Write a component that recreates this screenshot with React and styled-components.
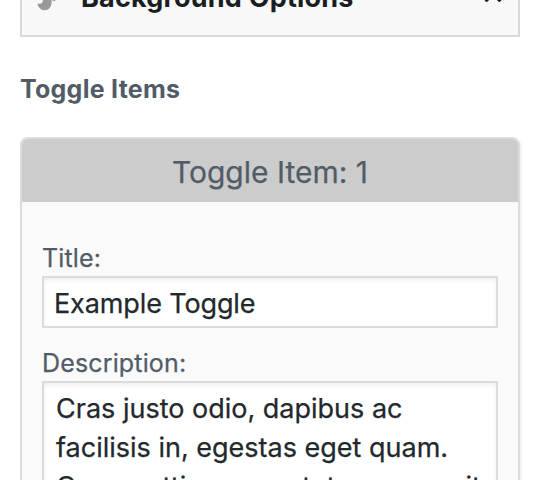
import React from "react";
import styled, { createGlobalStyle } from "styled-components";

const GlobalStyle = createGlobalStyle`
  * {
    box-sizing: border-box;
  }
  body {
    margin: 0;
    background: #fff;
    color: #525c67;
    font-family: Inter, "Liberation Sans", sans-serif;
    overflow: hidden;
  }
`;
const Sidebar = styled.div`
  height: 480px;
  padding: 0 20px;
  overflow: hidden;
`;
const PanelToggle = styled.div`
  display: flex;
  align-items: flex-start;
  justify-content: space-between;
  height: 37px;
  padding: 0 12px 0 14px;
  background: #f8f8f8;
  border: 2px solid #d9d9d9;
  border-top: 0;
  svg {
    flex: none;
  }
`;
const PanelTitle = styled.div`
  flex: 1;
  margin: -20px 0 0 25px;
  color: #191e23;
  font-size: 27px;
  font-weight: 700;
  line-height: 36px;
  letter-spacing: 0.2px;
  white-space: nowrap;
`;
const SectionTitle = styled.h2`
  margin: 35px 0 0;
  height: 65px;
  font-size: 25px;
  font-weight: 700;
  line-height: 34px;
  letter-spacing: 0.25px;
`;
const Card = styled.div`
  height: 380px;
  background: #fafafa;
  border: 2px solid #dcdcdc;
  border-radius: 8px 8px 0 0;
  box-shadow: 2px 2px 2px rgba(0, 0, 0, 0.05);
  -webkit-text-stroke: 0.25px;
`;
const CardHeader = styled.div`
  height: 63px;
  background: #ccc;
  border-radius: 6px 6px 0 0;
  font-size: 30px;
  line-height: 66px;
  text-align: center;
`;
const CardBody = styled.div`
  padding: 39px 20px 0;
`;
const Label = styled.label`
  display: block;
  height: 35px;
  font-size: 25px;
  line-height: 34px;
  letter-spacing: 0.15px;
`;
const Field = styled.div`
  height: ${props => props.height};
  margin-bottom: 18px;
  padding: ${props => props.inset};
  background: #fff;
  border: 2px solid #dcdcdc;
  box-shadow: inset 0 2px 4px rgba(0, 0, 0, 0.07);
  color: #23282d;
  font-size: 27px;
  line-height: 39px;
  white-space: nowrap;
`;
const Line = styled.div`
  letter-spacing: ${props => props.spacing || "normal"};
`;

const BrushIcon = () => (
  <svg width="20" height="14" viewBox="0 0 20 14">
    <path
      d="M1.500 3.200C3.500 4.200 5.500 3.800 6.300 2.400L7 0h8.500c.8 5.500-2 10.200-6.700 10.200C5 10.200 2 7.500 1.500 3.200z"
      fill="#999"
    />
    <path d="M16.500 0h3.500l-1.500 1.200h-2z" fill="#aaa" />
  </svg>
);
const ChevronIcon = () => (
  <svg width="26" height="8" viewBox="0 0 26 8">
    <path
      d="M6.600 0L13-7l6.400 7"
      stroke="#191e23"
      strokeWidth="3.6"
      strokeLinecap="round"
      fill="none"
    />
  </svg>
);

const App = () => {
  return (
    <>
      <GlobalStyle />
      <Sidebar>
        <PanelToggle>
          <BrushIcon />
          <PanelTitle>Background Options</PanelTitle>
          <ChevronIcon />
        </PanelToggle>
        <SectionTitle>Toggle Items</SectionTitle>
        <Card>
          <CardHeader>Toggle Item: 1</CardHeader>
          <CardBody>
            <Label>Title:</Label>
            <Field height="52px" inset="6px 10px">
              <Line spacing="-0.12px">Example Toggle</Line>
            </Field>
            <Label>Description:</Label>
            <Field height="160px" inset="6px 12px">
              <Line>Cras justo odio, dapibus ac</Line>
              <Line>facilisis in, egestas eget quam.</Line>
              <Line spacing="0.12px">Cras mattis consectetur purus sit</Line>
            </Field>
          </CardBody>
        </Card>
      </Sidebar>
    </>
  );
};

export default App;
